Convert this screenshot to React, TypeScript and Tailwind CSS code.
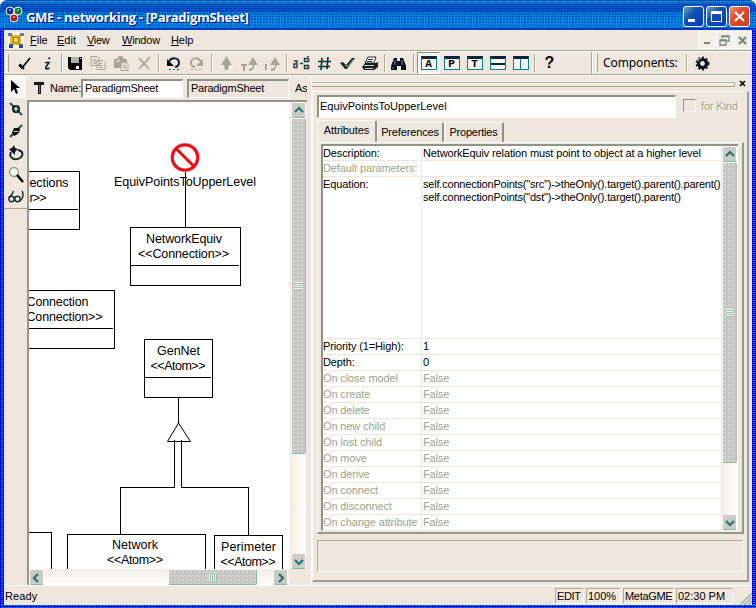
import React from 'react';

const etched = 'border-[#a9ae93]';

const Svg = ({ children, w = 17, h = 17, className = '' }: { children: React.ReactNode; w?: number; h?: number; className?: string }) => (
  <svg width={w} height={h} viewBox={`0 0 ${w} ${h}`} fill="none" className={'shrink-0 ' + className}>{children}</svg>
);

const Slot = ({ children, pressed }: { children: React.ReactNode; pressed?: boolean }) => (
  <div className={'flex h-[22px] w-[23px] shrink-0 items-center justify-center ' + (pressed ? 'border border-l-[#8a8f7c] border-t-[#8a8f7c] border-r-white border-b-white bg-[#f8f4ef]' : '')}>{children}</div>
);
const Sep = ({ className }: { className: string }) => (
  <div className={'flex shrink-0 justify-center ' + className}><div className="h-[18px] w-[2px] border-l border-[#a9ae93] border-r border-r-white" /></div>
);

const GRAY = '#a5a693';

const WinIcon = ({ letter, kind = 0 }: { letter?: string; kind?: number }) => (
  <div className="relative flex h-[14px] w-[16px] items-end justify-center border border-[#088088] border-t-[3px] border-t-[#002540] bg-[#f8f4ef]">
    {letter && <span className="font-['Liberation_Mono'] text-[11px] leading-[10px] font-bold text-black">{letter}</span>}
    {kind === 1 && <div className="flex h-full w-full flex-col justify-center"><div className="h-[2px] bg-[#002540]" /></div>}
    {kind === 2 && <div className="mx-auto h-full w-px bg-[#088088]" />}
  </div>
);

const Toolbar = () => (
  <div className="flex h-[24px] items-center border-t border-t-white border-b border-b-[#a9ae93]">
    <div className="ml-[2px] h-[18px] w-[3px] border-r border-[#a9ae93] border-l border-l-white" />
    <div className="w-[4px]" />
    <Slot><Svg><path d="M3 10l3 3 8-10" stroke="#001010" strokeWidth="1.800" /><path d="M4 9l3 4 1 1" stroke="#001010" strokeWidth="2" /></Svg></Slot>
    <Slot><Svg><path d="M11 2.500l-1.500 1.500M6 7.500h4l-3 4.500c-1 2 1 2.500 3.500 1" stroke="#032d2d" strokeWidth="1.600" /></Svg></Slot>
    <Sep className="w-[5px]" />
    <Slot><Svg><path d="M1 2h14v13H3l-2-2z" fill="#000" /><path d="M4 2h8v6H4z" fill="#a8b0b0" /><path d="M4 10h8v4H4z" fill="#000" /><path d="M9 11h3v3H9zM13 3h1v1h-1z" fill="#fff" /></Svg></Slot>
    <Slot><Svg><path d="M1 1.500h6l2 2v7H1zM7 5.500h6l2 2v7H7z" fill="#efe7de" stroke={GRAY} /><path d="M3 4.500h3M3 6.500h4M3 8.500h3M9 8.500h3M9 10.500h4M9 12.500h4" stroke={GRAY} /></Svg></Slot>
    <Slot><Svg><path d="M1 4h3l2-3h3l2 3h3v9H1z" fill={GRAY} /><path d="M8 7.500h5l2 2v6H8z" fill="#efe7de" stroke={GRAY} /><path d="M10 10.500h3M10 12.500h4M4 4.500h6" stroke={GRAY} /><path d="M3 7l4-2" stroke="#fff" /></Svg></Slot>
    <Slot><Svg><path d="M3 3l10 11M14 2L3 14" stroke={GRAY} strokeWidth="1.800" /><path d="M14 14l1 1" stroke="#fff" /></Svg></Slot>
    <Sep className="w-[6px]" />
    <Slot><Svg><path d="M4 7c2-5 10-5 10 1 0 2-2 4-4 4" stroke="#081830" strokeWidth="2" /><path d="M2 4v7h7z" fill="#000" /><path d="M4 14.500h2m2 0h2m2 0h2" stroke="#087070" /></Svg></Slot>
    <Slot><Svg><path d="M13 7C11 2 3 2 3 8c0 2 2 4 4 4" stroke={GRAY} strokeWidth="2" /><path d="M15 4v7H8z" fill={GRAY} /><path d="M3 14.500h2m2 0h2m2 0h2" stroke={GRAY} /></Svg></Slot>
    <Sep className="w-[7px]" />
    <Slot><Svg><path d="M10 3l4 7v2h-2l-1 4" stroke="#fff" /><path d="M8.500 1l5.500 9h-3l-1 5H7l-1-5H3z" fill={GRAY} /></Svg></Slot>
    <Slot><Svg><path d="M0 9h6v2H4v5H2v-5H0z" fill={GRAY} /><path d="M12 2l5 8h-3l-1 4-3 2H8v-2l3-1 1-3H7z" fill={GRAY} /><path d="M14 11l-1 4-3 1" stroke="#fff" /></Svg></Slot>
    <Slot><Svg><path d="M1 9h2v6H1z" fill={GRAY} /><path d="M11 2l5 8h-3l-1 4-3 2H7v-2l3-1 1-3H6z" fill={GRAY} /><path d="M13 11l-1 4-3 1M3.500 9v7" stroke="#fff" /></Svg></Slot>
    <Sep className="w-[6px]" />
    <Slot><Svg><path d="M1 6h3v6.500H1V9h3M7 8.500h3" stroke="#303c38" strokeWidth="1.400" /><path d="M11.500 3.500h4v3h-4zM11.500 10.500h4v3h-4z" stroke="#203a38" strokeWidth="1.500" /><path d="M14 1.500h2" stroke="#203a38" /></Svg></Slot>
    <Slot><Svg><path d="M6 3L5 15M12 2l-1 12M2 6.500h13M2 11.500h12" stroke="#083838" strokeWidth="1.700" /></Svg></Slot>
    <Slot><Svg><path d="M1 8l3-1 3 3 6-7h3L8 14H6z" fill="#202822" /><path d="M6 10l2 2 6-7" stroke="#83ad99" /></Svg></Slot>
    <Slot><Svg><path d="M6 2h8l-2 6H3z" fill="#fff" stroke="#252b29" /><path d="M3 8h11l2-1v5l-4 3H2L0 12z" fill="#17201f" /><path d="M6 4.500h5M5 6.500h5" stroke="#333" /><path d="M2 10.500h10M3 13.500h8" stroke="#c9cdc4" /></Svg></Slot>
    <Sep className="w-[5px]" />
    <Slot><Svg><path d="M4 3h3v3h3V3h3l3 8v4h-5v-4H7v4H1v-4z" fill="#020b22" /><path d="M5 5v5M12 5v5M3 12v2" stroke="#6b9b9a" /></Svg></Slot>
    <Sep className="w-[7px]" />
    <Slot pressed><WinIcon letter="A" /></Slot>
    <Slot><WinIcon letter="P" /></Slot>
    <Slot><WinIcon letter="T" /></Slot>
    <Slot><WinIcon kind={1} /></Slot>
    <Slot><WinIcon kind={2} /></Slot>
    <Sep className="w-[6px]" />
    <Slot><span className="font-['Liberation_Sans'] text-[16px] font-bold text-black">?</span></Slot>
    <div className="ml-[30px] h-[22px] w-[2px] border-l border-[#a9ae93] border-r border-r-white" />
    <div className="ml-[2px] h-[18px] w-[3px] border-r border-[#a9ae93] border-l border-l-white" />
    <span className="ml-[5px] w-[78px] whitespace-nowrap font-['Noto_Sans'] text-[12px] tracking-[-0.08px]">Components:</span>
    <Sep className="ml-[2px] w-[8px]" />
    <Slot><Svg><circle cx="8.500" cy="8.500" r="4" stroke="#060c18" strokeWidth="3.200" /><circle cx="8.500" cy="8.500" r="6.200" stroke="#060c18" strokeWidth="1.500" strokeDasharray="2 2" /><path d="M3 6l3-3" stroke="#7790a8" strokeWidth="2" /></Svg></Slot>
  </div>
);

const Title = () => (
  <div className="relative flex h-[30px] shrink-0 items-center overflow-hidden bg-[linear-gradient(#0040d8_0,#3090e8_2px,#0048e0_4px,#0040d8_12px,#0050f0_22px,#0058ff_26px,#0010d0_30px)] pl-[5px] pr-[6px]">
    <div className="absolute inset-0 bg-[conic-gradient(#0000ff_25%,transparent_0_50%,#0080a0_0_75%,transparent_0)] bg-[size:2px_2px] opacity-60" />
    <div className="absolute inset-x-0 top-[12px] bottom-[2px] bg-[conic-gradient(#00e0ff_25%,transparent_0_50%,#00d8ff_0_75%,transparent_0)] bg-[size:3px_3px] opacity-40" />
    <Svg w={18} h={18} className="relative">
      <circle cx="5" cy="5" r="4" fill="#182890" stroke="#fff" /><circle cx="13" cy="5" r="4" fill="#128030" stroke="#fff" /><circle cx="9" cy="12" r="4" fill="#c01818" stroke="#fff" />
      <path d="M4 4h2M12 4h2M8 11h2" stroke="#d0e0ff" />
    </Svg>
    <span className="relative ml-[3px] mt-[3px] whitespace-nowrap font-['Open_Sans'] text-[13px] leading-[16px] font-bold tracking-[-0.31px] text-white [text-shadow:1px_1px_#001080]">GME - networking - [ParadigmSheet]</span>
    <div className="relative ml-auto mt-[3px] flex gap-[2px]">
      <div className="flex h-[21px] w-[21px] items-end rounded-[3px] border border-white bg-[linear-gradient(135deg,#70a0c0,#1050b0_40%,#0838d0)] p-[4px]"><div className="h-[3px] w-[7px] bg-white" /></div>
      <div className="flex h-[21px] w-[21px] items-center justify-center rounded-[3px] border border-white bg-[linear-gradient(135deg,#70a0c0,#1050b0_40%,#0838d0)]"><div className="h-[11px] w-[11px] border border-t-[3px] border-white" /></div>
      <div className="flex h-[21px] w-[21px] items-center justify-center rounded-[3px] border border-white bg-[linear-gradient(135deg,#e89080,#e44a2c_40%,#d83818)]"><Svg w={13} h={13}><path d="M2 2l9 9M11 2l-9 9" stroke="#fff" strokeWidth="2.200" /></Svg></div>
    </div>
  </div>
);

const MenuItem = ({ k, rest, className }: { k: string; rest: string; className: string }) => (
  <span className={'shrink-0 whitespace-nowrap ' + className}><u className="underline-offset-1">{k}</u>{rest}</span>
);
const Mdi = ({ children }: { children: React.ReactNode }) => (
  <div className="flex h-[18px] w-[17px] items-center justify-center border border-white bg-[#f3eee6]">{children}</div>
);
const Menu = () => (
  <div className="flex h-[20px] items-center pl-[4px] pr-px text-[11px]">
    <Svg w={16} h={16} className="bg-white">
      <path d="M2 3h11v10H2z" fill="#e8b820" /><path d="M0 1h4v3H0zM12 1h4v3h-4z" fill="#6878a0" /><path d="M1 12h4v4H1zM11 12h4v4h-4z" fill="#2448a0" /><path d="M2 2l12 12M14 2L2 14" stroke="#807850" /><circle cx="8" cy="8" r="3" fill="#f8e040" stroke="#b06810" />
    </Svg>
    <MenuItem k="F" rest="ile" className="ml-[6px] w-[27px]" />
    <MenuItem k="E" rest="dit" className="w-[30px]" />
    <MenuItem k="V" rest="iew" className="w-[35px] tracking-[-0.3px]" />
    <MenuItem k="W" rest="indow" className="w-[49px] tracking-[-0.2px]" />
    <MenuItem k="H" rest="elp" className="w-[30px] tracking-[-0.1px]" />
    <div className="ml-auto flex gap-px">
      <Mdi><div className="mt-[5px] h-[2px] w-[6px] bg-[#7b8680]" /></Mdi>
      <Mdi><Svg w={11} h={11}><path d="M3 3.500V1h7v5H8M3 1.500h7" stroke="#7b8680" strokeWidth="1.300" /><path d="M1 5h6v5H1zM1 5.500h6" stroke="#7b8680" strokeWidth="1.300" /></Svg></Mdi>
      <Mdi><Svg w={11} h={11}><path d="M2 2l7 7M9 2L2 9" stroke="#7b8680" strokeWidth="2.200" /></Svg></Mdi>
    </div>
  </div>
);

const LeftTools = () => (
  <div className="w-[23px] shrink-0">
    <div className="h-[133px] border-b border-[#a9ae93]">
      <div className="flex h-[22px] w-[22px] items-center justify-center bg-[#faf7f3]"><Svg w={12} h={16}><path d="M2 1v12l3-3 2 5 2-1-2-5h4z" fill="#000" /></Svg></div>
      <div className="flex h-[22px] items-center justify-center"><Svg w={14} h={14}><path d="M1 1l12 12" stroke="#265050" strokeWidth="2" /><circle cx="7" cy="7" r="4" fill="#001818" /><path d="M7 4.500v5M4.500 7h5" stroke="#fff" strokeWidth="1.200" /></Svg></div>
      <div className="flex h-[22px] items-center justify-center"><Svg w={14} h={14}><path d="M1 13L13 1" stroke="#265050" strokeWidth="2" /><path d="M3 9l2-5h5l1 2-2 4-4 2z" fill="#001010" /><path d="M5 7.500h4" stroke="#b9dada" /></Svg></div>
      <div className="flex h-[22px] items-center justify-center"><Svg w={16} h={16}><path d="M3 7C0 13 7 16 12 13c4-3 3-7-2-8" stroke="#002828" strokeWidth="1.800" /><path d="M1 4l3-1 2-3 1 3 3 1-3 3v3L4 7z" fill="#001818" /></Svg></div>
      <div className="flex h-[22px] items-center justify-center"><Svg w={16} h={16}><circle cx="6" cy="5" r="4.500" fill="#f4f5eb" stroke="#8c9b88" strokeWidth="1.300" /><path d="M9 8l6 7" stroke="#000" strokeWidth="2.500" /></Svg></div>
      <div className="flex h-[22px] items-center justify-center"><Svg w={16} h={14}><circle cx="3.500" cy="9" r="2.700" stroke="#102c2c" strokeWidth="1.400" /><circle cx="9.500" cy="9" r="2.700" stroke="#102c2c" strokeWidth="1.400" /><path d="M1 8C2 5 6 4 5 1M12 11c3-2 4-7 2-10" stroke="#102c2c" strokeWidth="1.400" /></Svg></div>
    </div>
  </div>
);

const T = ({ x, y, w, children }: { x: number; y: number; w: number; children: string }) => (
  <text x={x} y={y} textLength={w} lengthAdjust="spacing" fontSize="12.500" fill="#000" fontFamily="'Liberation Sans', sans-serif" xmlSpace="preserve">{children}</text>
);

const Diagram = () => (
  <svg width={261} height={467} viewBox="29 102 261 467" className="block shrink-0 bg-white">
    <g stroke="#000" fill="none" shapeRendering="crispEdges">
      <path d="M20 171.500H79.500V229.500H20M20 209.500H78" />
      <path d="M130.500 227.500H240.500V285.500H130.500ZM130 265.500H239" />
      <path d="M185.500 172V227" />
      <path d="M20 290.500H114.500V348.500H20M20 328.500H113" />
      <path d="M144.500 339.500H212.500V397.500H144.500ZM144 377.500H211" />
      <path d="M178.500 398V423M174.500 440V487.500H120.500V534M181.500 440V487.500H248.500V535" />
      <path d="M20 532.500H51.500V580M67.500 580V534.500H205.500V580M214.500 580V535.500H282.500V580" />
    </g>
    <path d="M178.500 423L167.500 441.500H190.500Z" stroke="#000" fill="none" />
    <circle cx="185" cy="157.500" r="12.700" stroke="#c9b0d4" strokeWidth="4" fill="#fff" />
    <circle cx="185" cy="157.500" r="12.700" stroke="#f80808" strokeWidth="2.800" fill="none" />
    <path d="M176.500 149L193.500 166" stroke="#f80808" strokeWidth="3" />
    <T x={29.5} y={187} w={39}>ections</T>
    <T x={29.5} y={202} w={17}>{'r>>'}</T>
    <T x={114} y={186} w={142}>EquivPointsToUpperLevel</T>
    <T x={146} y={243} w={76}>NetworkEquiv</T>
    <T x={138} y={258} w={91}>{'<<Connection>>'}</T>
    <T x={26.5} y={306} w={62}>Connection</T>
    <T x={26.5} y={321} w={76}>{'Connection>>'}</T>
    <T x={157} y={355} w={43}>GenNet</T>
    <T x={150.5} y={370} w={55}>{'<<Atom>>'}</T>
    <T x={112} y={549} w={46}>Network</T>
    <T x={107} y={564} w={56}>{'<<Atom>>'}</T>
    <T x={221} y={551} w={55}>Perimeter</T>
    <T x={220.5} y={566} w={55}>{'<<Atom>>'}</T>
  </svg>
);

const ARROWS = { up: 'M2 7l4-4 4 4', down: 'M2 4l4 4 4-4', left: 'M7 2L3 6l4 4', right: 'M4 2l4 4-4 4' };
const SBtn = ({ dir }: { dir: keyof typeof ARROWS }) => (
  <div className="flex h-[16px] w-[15px] shrink-0 items-center justify-center rounded-[2px] border border-white border-b-[#83bd9c] bg-[#cbcac6]"><Svg w={12} h={11}><path d={ARROWS[dir]} stroke="#227570" strokeWidth="2.200" /></Svg></div>
);
const speck = "bg-[#c6c6c6] bg-[radial-gradient(#e9e4dc_0.6px,transparent_0.8px)] bg-[size:4px_4px]";

const VScroll = ({ thumb }: { thumb: string }) => (
  <div className="flex w-[16px] shrink-0 flex-col items-center border-l border-[#efe7de] bg-[linear-gradient(90deg,#f3ede5,#fff)]">
    <SBtn dir="up" />
    <div className={'flex w-[15px] shrink-0 items-center justify-center rounded-[2px] border border-white border-r-[#a4c2ae] border-b-[#83bd9c] ' + speck + ' ' + thumb}>
      <div className="h-[8px] w-[7px] bg-[repeating-linear-gradient(#fff_0_1px,#98c2a5_1px_2px)]" />
    </div>
    <div className="flex-1" />
    <SBtn dir="down" />
  </div>
);

const Canvas = () => (
  <div className="flex w-[280px] flex-col border-l-2 border-t-2 border-[#96978a]">
    <div className="flex h-[467px]">
      <Diagram />
      <VScroll thumb="h-[336px]" />
    </div>
    <div className="flex h-[16px] w-[260px] items-center bg-[linear-gradient(#f3ede5,#fff)]">
      <SBtn dir="left" />
      <div className="flex-1" />
      <div className={'flex h-[16px] w-[89px] items-center justify-center rounded-[2px] border border-white border-r-[#83bd9c] border-b-[#83bd9c] ' + speck}><div className="h-[7px] w-[8px] bg-[repeating-linear-gradient(90deg,#f3f3e8_0_1px,#98c2a5_1px_2px)]" /></div>
      <div className="w-[16px]" />
      <SBtn dir="right" />
      <div className="w-px" />
    </div>
  </div>
);

const rows: [string, string, string, boolean][] = [
  ['Description:', 'NetworkEquiv relation must point to object at a higher level', 'h-[15px]', false],
  ['Default parameters:', '', 'h-[16px]', true],
  ['Equation:', 'self.connectionPoints("src")->theOnly().target().parent().parent()\nself.connectionPoints("dst")->theOnly().target().parent()', 'h-[162px]', false],
  ['Priority (1=High):', '1', 'h-[16px]', false],
  ['Depth:', '0', 'h-[16px]', false],
  ...['On close model', 'On create', 'On delete', 'On new child', 'On lost child', 'On move', 'On derive', 'On connect', 'On disconnect', 'On change attribute'].map(
    (n) => [n, 'False', 'h-[16px]', true] as [string, string, string, boolean]),
];

const Tab = ({ label, className }: { label: string; className: string }) => (
  <div className={'flex items-center justify-center rounded-t-[2px] border-l border-t border-white border-r-2 border-r-[#8f9483] ' + className}>{label}</div>
);

const Panel = () => (
  <div className="ml-[4px] flex w-[441px] shrink-0 flex-col border-l border-white">
    <div className="flex h-[15px] items-center pt-px">
      <div className="h-[5px] w-[423px] border-y border-r border-[#a9ae93] shadow-[inset_0_1px_#fff,0_-1px_#fff]" />
      <Svg w={8} h={8} className="ml-[4px]"><path d="M1 1l5 5M6 1L1 6" stroke="#000" strokeWidth="1.700" /></Svg>
    </div>
    <div className="flex h-[491px] w-[437px] flex-col border-l border-t border-white border-r-2 border-r-[#9b9e91] border-b-2 border-b-[#9b9e91] pl-[4px] pt-[3px]">
      <div className="flex h-[23px] items-start">
        <div className="flex h-[23px] w-[359px] items-center border border-l-2 border-t-2 border-l-[#8f9483] border-t-[#8f9483] border-b-white border-r-white bg-white pb-px pl-px text-[11px] tracking-[0.03px]">EquivPointsToUpperLevel</div>
        <div className="ml-[7px] mt-[4px] h-[13px] w-[13px] border border-l-[#8f9483] border-t-[#8f9483] border-white" />
        <span className="ml-[5px] mt-[5px] whitespace-nowrap text-[11px] leading-[13px] tracking-[-0.15px] text-[#9ba58a] [text-shadow:1px_1px_#fff]">for Kind</span>
      </div>
      <div className="flex h-[24px] items-end pt-[3px] text-[11px]">
        <Tab label="Attributes" className="h-[22px] w-[60px] pb-[2px] tracking-[-0.1px]" />
        <Tab label="Preferences" className="h-[20px] w-[67px] tracking-[-0.15px]" />
        <Tab label="Properties" className="h-[20px] w-[60px] tracking-[-0.2px]" />
      </div>
      <div className="flex h-[392px] w-[427px] border-l border-t border-white border-r-2 border-b-2 border-r-[#96988a] border-b-[#96988a] pl-[3px] pt-px">
        <div className="flex h-[387px] w-[417px] border-l-2 border-t-2 border-[#8f9483] border-b border-b-white bg-white text-[11px] leading-[13px] text-black">
          <div className="w-[398px] shrink-0">
            {rows.map(([a, b, h, dim]) => (
              <div key={a} className={'flex border-b border-[#efe7de] ' + h + (dim ? ' text-[#9ba58a]' : '')}>
                <div className="w-[99px] shrink-0 whitespace-nowrap border-r border-[#efe7de] pt-px tracking-[-0.12px]">{a}</div>
                <div className={'whitespace-pre pl-px pt-px ' + (a === 'Equation:' ? 'tracking-[-0.2px]' : 'tracking-[-0.14px]')}>{b}</div>
              </div>
            ))}
          </div>
          <VScroll thumb="h-[301px]" />
        </div>
      </div>
      <div className="mt-[6px] h-[32px] w-[426px] border border-l-[#a9ae93] border-t-[#a9ae93] border-b-white border-r-white" />
    </div>
  </div>
);

const Cell = ({ children, className }: { children: string; className: string }) => (
  <div className={'h-[16px] shrink-0 whitespace-nowrap border border-l-[#a9ae93] border-t-[#a9ae93] border-b-white border-r-white pl-px leading-[15px] ' + className}>{children}</div>
);

const edge = 'bg-[#0010d0] bg-[conic-gradient(#0080e0_25%,#0000ff_0_50%,#0010b0_0_75%,#0000ff_0)] bg-[size:3px_2px]';

export default function App() {
  return (
    <div className="flex h-[608px] w-[756px] flex-col overflow-hidden rounded-t-[7px] bg-[#efe7de] font-['Liberation_Sans',sans-serif] text-[11px] text-black">
      <Title />
      <div className="flex h-[575px]">
        <div className={'w-[4px] shrink-0 ' + edge} />
        <div className="flex w-[748px] flex-col">
          <Menu />
          <div className={'h-px border-t ' + etched} />
          <Toolbar />
          <div className="h-px bg-white" />
          <div className="flex h-[509px]">
            <LeftTools />
            <div className="flex w-[280px] shrink-0 flex-col">
              <div className="flex h-[24px] items-center overflow-hidden whitespace-nowrap">
                <Svg w={12} h={14} className="ml-[6px]"><path d="M1 1h10v3H8v9H5V4H1z" fill="#101820" /><path d="M6.500 4v8" stroke="#61717a" /></Svg>
                <span className="ml-[5px] w-[33px] tracking-[-0.3px]">Name:</span>
                <div className="h-[19px] w-[102px] shrink-0 border-l-2 border-t-2 border-[#8f9483] border-b border-b-white border-r border-r-white bg-white pl-[2px] leading-[15px] tracking-[-0.2px]">ParadigmSheet</div>
                <div className="ml-[4px] h-[19px] w-[102px] shrink-0 border-l-2 border-t-2 border-[#8f9483] border-b border-b-white border-r border-r-white pl-[2px] leading-[15px] tracking-[-0.2px]">ParadigmSheet</div>
                <span className="ml-[6px]">As</span>
              </div>
              <Canvas />
            </div>
            <Panel />
          </div>
          <div className="flex h-[20px] items-center border-t border-white pl-px pt-px">
            <span className="tracking-[0.1px]">Ready</span>
            <div className="ml-auto flex gap-[2px]">
              <Cell className="w-[29px] tracking-[-0.4px]">EDIT</Cell>
              <Cell className="w-[35px]">100%</Cell>
              <Cell className="w-[51px] tracking-[-0.3px]">MetaGME</Cell>
              <Cell className="w-[57px]">02:30 PM</Cell>
            </div>
            <Svg w={12} h={12} className="ml-[7px] mt-[5px]"><path d="M0 12L12 0M4 12l8-8M8 12l4-4" stroke="#a9ae93" strokeWidth="1.500" /></Svg>
          </div>
        </div>
        <div className={'w-[4px] shrink-0 ' + edge} />
      </div>
      <div className={'h-[3px] ' + edge} />
    </div>
  );
}
